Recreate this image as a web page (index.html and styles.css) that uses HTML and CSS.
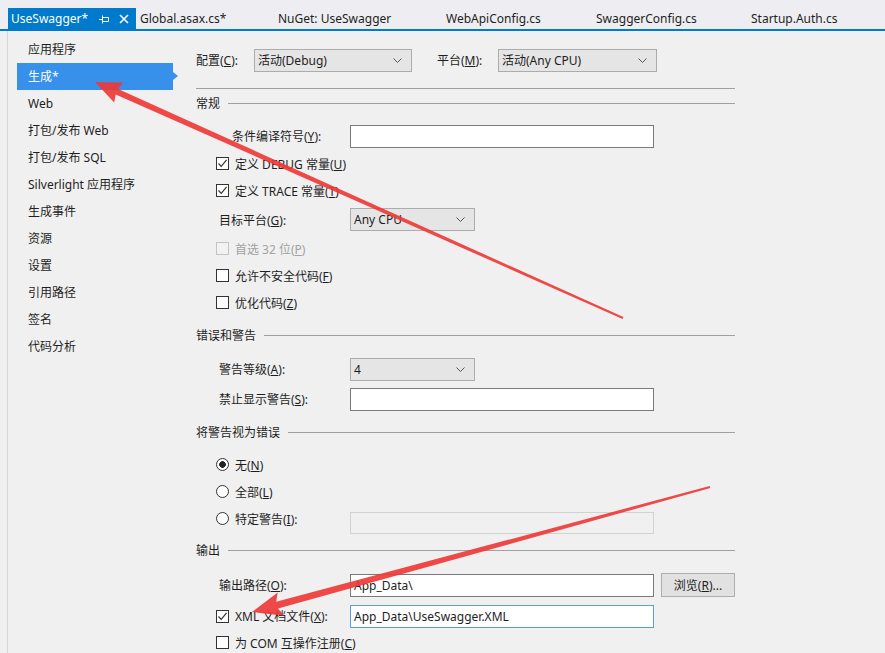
FILE: index.html
```html
<!DOCTYPE html>
<html lang="zh-CN">
<head>
<meta charset="utf-8">
<title>UseSwagger 属性</title>
<link rel="stylesheet" href="styles.css">
</head>
<body>
<div class="tabs">
  <div class="tab tab-active">
    <span class="tab-title">UseSwagger*</span>
    <svg class="pin" width="11" height="10" viewBox="0 0 11 10"><path d="M0 5.5H3.5M3.5 1.5V9.5M3.5 3.5H9.5V7.5H3.5" fill="none" stroke="#fff" stroke-width="1"/></svg>
    <svg class="close" width="10" height="10" viewBox="0 0 10 10"><path d="M1 1L9 9M9 1L1 9" stroke="#fff" stroke-width="1.6"/></svg>
  </div>
  <div class="tab tab-2">Global.asax.cs*</div>
  <div class="tab tab-3">NuGet: UseSwagger</div>
  <div class="tab tab-4">WebApiConfig.cs</div>
  <div class="tab tab-5">SwaggerConfig.cs</div>
  <div class="tab tab-6">Startup.Auth.cs</div>
</div>
<div class="main">
  <nav class="nav">
    <div class="nav-item">应用程序</div>
    <div class="nav-item nav-sel">生成*</div>
    <div class="nav-item">Web</div>
    <div class="nav-item">打包/发布 Web</div>
    <div class="nav-item">打包/发布 SQL</div>
    <div class="nav-item">Silverlight 应用程序</div>
    <div class="nav-item">生成事件</div>
    <div class="nav-item">资源</div>
    <div class="nav-item">设置</div>
    <div class="nav-item">引用路径</div>
    <div class="nav-item">签名</div>
    <div class="nav-item">代码分析</div>
  </nav>
  <section class="panel">
    <div class="row row-cfg">
      <span class="lbl-cfg">配置(<u>C</u>):</span>
      <div class="dd dd-cfg">活动(Debug)<svg class="chev" width="9" height="5" viewBox="0 0 9 5"><path d="M0.5 0.5L4.5 4.5L8.5 0.5" fill="none" stroke="#555" stroke-width="1"/></svg></div>
      <span class="lbl-plat">平台(<u>M</u>):</span>
      <div class="dd dd-plat">活动(Any CPU)<svg class="chev" width="9" height="5" viewBox="0 0 9 5"><path d="M0.5 0.5L4.5 4.5L8.5 0.5" fill="none" stroke="#555" stroke-width="1"/></svg></div>
    </div>
    <div class="sep"></div>

    <div class="gh gh-1"><span>常规</span></div>
    <div class="row row-cond">
      <span class="lbl lbl-cond">条件编译符号(<u>Y</u>):</span>
      <div class="inp"></div>
    </div>
    <div class="row row-cb row-debug">
      <span class="cb cb-on"><svg width="11" height="11" viewBox="0 0 11 11"><path d="M1.5 5.5L4.2 8.4L9.6 1.8" fill="none" stroke="#333" stroke-width="1.2"/></svg></span>
      <span>定义 DEBUG 常量(<u>U</u>)</span>
    </div>
    <div class="row row-cb">
      <span class="cb cb-on"><svg width="11" height="11" viewBox="0 0 11 11"><path d="M1.5 5.5L4.2 8.4L9.6 1.8" fill="none" stroke="#333" stroke-width="1.2"/></svg></span>
      <span>定义 TRACE 常量(<u>T</u>)</span>
    </div>
    <div class="row row-target">
      <span class="lbl">目标平台(<u>G</u>):</span>
      <div class="dd dd-small">Any CPU<svg class="chev" width="9" height="5" viewBox="0 0 9 5"><path d="M0.5 0.5L4.5 4.5L8.5 0.5" fill="none" stroke="#555" stroke-width="1"/></svg></div>
    </div>
    <div class="row row-cb row-disabled">
      <span class="cb cb-dis"></span>
      <span>首选 32 位(<u>P</u>)</span>
    </div>
    <div class="row row-cb">
      <span class="cb"></span>
      <span>允许不安全代码(<u>F</u>)</span>
    </div>
    <div class="row row-cb">
      <span class="cb"></span>
      <span>优化代码(<u>Z</u>)</span>
    </div>

    <div class="gh gh-2"><span>错误和警告</span></div>
    <div class="row row-level">
      <span class="lbl">警告等级(<u>A</u>):</span>
      <div class="dd dd-small">4<svg class="chev" width="9" height="5" viewBox="0 0 9 5"><path d="M0.5 0.5L4.5 4.5L8.5 0.5" fill="none" stroke="#555" stroke-width="1"/></svg></div>
    </div>
    <div class="row row-suppress">
      <span class="lbl">禁止显示警告(<u>S</u>):</span>
      <div class="inp"></div>
    </div>

    <div class="gh gh-3"><span>将警告视为错误</span></div>
    <div class="row row-cb row-radio1">
      <span class="rb rb-on"></span>
      <span>无(<u>N</u>)</span>
    </div>
    <div class="row row-cb">
      <span class="rb"></span>
      <span>全部(<u>L</u>)</span>
    </div>
    <div class="row row-cb">
      <span class="cb-lbl"><span class="rb"></span><span>特定警告(<u>I</u>):</span></span>
      <div class="inp inp-dis"></div>
    </div>

    <div class="gh gh-4"><span>输出</span></div>
    <div class="row row-out">
      <span class="lbl">输出路径(<u>O</u>):</span>
      <div class="inp">App_Data\</div>
      <div class="btn">浏览(<u>R</u>)...</div>
    </div>
    <div class="row row-cb row-xml">
      <span class="cb-lbl"><span class="cb cb-on"><svg width="11" height="11" viewBox="0 0 11 11"><path d="M1.5 5.5L4.2 8.4L9.6 1.8" fill="none" stroke="#333" stroke-width="1.2"/></svg></span><span>XML 文档文件(<u>X</u>):</span></span>
      <div class="inp inp-focus">App_Data\UseSwagger.XML</div>
    </div>
    <div class="row row-cb">
      <span class="cb"></span>
      <span>为 COM 互操作注册(<u>C</u>)</span>
    </div>
  </section>
</div>

<svg class="arrows" width="885" height="653" viewBox="0 0 885 653">
  <polygon points="95,82 123.2,82.6 118.1,89.1 623.4,317.1 622.6,318.9 115.7,94.5 114.2,102.6" fill="#ee3a38" fill-opacity="0.92"/>
  <polygon points="252,612 277.7,592.5 276.2,601.8 709.7,486 710.3,488 278,608.6 284.1,615.7" fill="#ee3a38" fill-opacity="0.92"/>
</svg>
</body>
</html>
```
FILE: styles.css
```css
html, body {
  margin: 0;
  padding: 0;
}
body {
  width: 885px;
  height: 653px;
  overflow: hidden;
  position: relative;
  background: #f0f0f0;
  color: #1e1e1e;
  font-family: "Noto Sans", "Noto Sans CJK SC", sans-serif;
  font-size: 12px;
}
u {
  text-decoration: underline;
  text-underline-offset: 1px;
}

/* tab strip */
.tabs {
  height: 31px;
  box-sizing: border-box;
  background: #eeeef2;
  border-bottom: 2px solid #007acc;
  display: flex;
  align-items: flex-end;
  padding-left: 8px;
}
.tab {
  height: 21px;
  box-sizing: border-box;
  display: flex;
  align-items: center;
  padding-left: 4px;
  font-size: 12px;
  color: #1e1e1e;
  white-space: nowrap;
}
.tab-active {
  width: 128px;
  padding-left: 3px;
  background: #007acc;
  color: #fff;
}
.tab-title { flex: none; }
.pin { margin-left: 11px; }
.close { margin-left: 9px; }
.tab-2 { width: 138px; }
.tab-3 { width: 168px; }
.tab-4 { width: 150px; }
.tab-5 { width: 155px; }
.tab-6 { width: 120px; }

/* main area */
.main {
  display: flex;
  height: 622px;
}
.nav {
  margin-left: 7px;
  width: 188px;
  border-left: 1px solid #d6d6dc;
  padding-top: 5px;
  flex: none;
}
.nav-item {
  position: relative;
  height: 27px;
  line-height: 27px;
  width: 156px;
  margin-left: 9px;
  padding-left: 11px;
  box-sizing: border-box;
  white-space: nowrap;
}
.nav-sel {
  background: #3790ea;
  color: #fff;
}
.nav-sel::after {
  content: "";
  position: absolute;
  left: 156px;
  top: 9px;
  border-left: 5px solid #3790ea;
  border-top: 4.5px solid transparent;
  border-bottom: 4.5px solid transparent;
}

.panel {
  width: 539px;
  padding-top: 16px;
  flex: none;
}
.row {
  display: flex;
  align-items: center;
  height: 27px;
  white-space: nowrap;
}
.row-cfg { height: 26px; }
.lbl-cfg { width: 58px; }
.lbl-plat { width: 61px; margin-left: 25px; }
.sep {
  height: 1px;
  background: #a0a0a0;
  margin-top: 15px;
}
.gh {
  display: flex;
  align-items: center;
  height: 20px;
}
.gh::after {
  content: "";
  flex: 1;
  height: 1px;
  background: #a0a0a0;
  margin-left: 8px;
}
.gh-1 { margin-top: 4px; }
.gh-2 { margin-top: 9px; }
.gh-3 { margin-top: 10px; }
.gh-4 { margin-top: 8px; }

.lbl {
  width: 154px;
  padding-left: 23px;
  box-sizing: border-box;
  flex: none;
}
.lbl-cond { padding-left: 36px; }

.row-cond { height: 28px; margin-top: 9px; }
.row-target { height: 31px; }
.row-level { height: 26px; margin-top: 11px; }
.row-suppress { height: 26px; margin-top: 4px; }
.row-radio1 { margin-top: 9px; }
.row-out { height: 26px; margin-top: 12px; }
.row-xml { height: 26px; margin-top: 5px; }

.row-cb { padding-left: 20px; }
.row-cb > .cb, .row-cb > .rb { margin-right: 6px; }
.cb-lbl {
  display: flex;
  align-items: center;
  width: 134px;
  flex: none;
}
.cb-lbl > .cb, .cb-lbl > .rb { margin-right: 6px; }
.row-disabled { color: #a2a2a2; }

.cb {
  width: 13px;
  height: 13px;
  box-sizing: border-box;
  border: 1px solid #333;
  background: #fff;
  display: flex;
  align-items: center;
  justify-content: center;
  flex: none;
}
.cb-dis {
  border-color: #c4c4c4;
  background: #f2f2f2;
}
.rb {
  width: 13px;
  height: 13px;
  box-sizing: border-box;
  border: 1px solid #333;
  border-radius: 50%;
  background: #fff;
  flex: none;
}
.rb-on {
  background: radial-gradient(circle, #222 0, #222 3px, #fff 3.6px);
}

.dd {
  position: relative;
  height: 23px;
  box-sizing: border-box;
  border: 1px solid #acacac;
  background: #e5e5e5;
  display: flex;
  align-items: center;
  padding-left: 3px;
  flex: none;
}
.chev {
  position: absolute;
  right: 9px;
  top: 8px;
}
.dd-cfg { width: 158px; }
.dd-plat { width: 159px; }
.dd-small { width: 125px; }

.inp {
  width: 304px;
  height: 23px;
  box-sizing: border-box;
  border: 1px solid #7a7a7a;
  background: #fff;
  display: flex;
  align-items: center;
  padding-left: 3px;
  flex: none;
}
.inp-dis {
  border-color: #d2d2d2;
  background: #f0f0f0;
  height: 22px;
  margin-top: 8px;
}
.inp-focus {
  border-color: #569de5;
}
.btn {
  margin-left: 7px;
  width: 74px;
  height: 24px;
  box-sizing: border-box;
  border: 1px solid #adadad;
  background: #e1e1e1;
  display: flex;
  align-items: center;
  justify-content: center;
  flex: none;
}

.arrows {
  position: absolute;
  left: 0;
  top: 0;
  pointer-events: none;
}
```
